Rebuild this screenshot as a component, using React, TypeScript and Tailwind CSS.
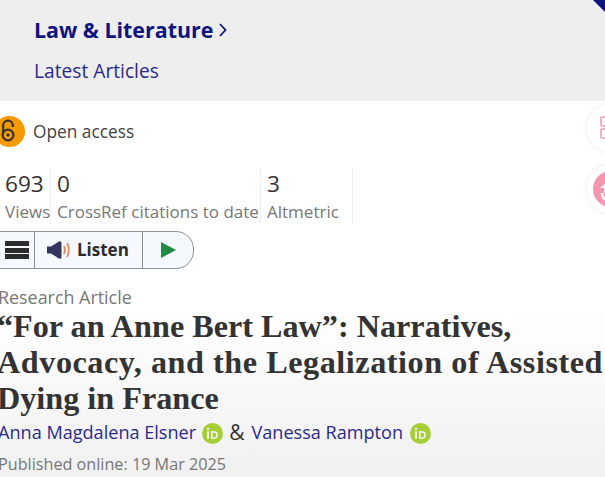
const OrcidBadge = () => (
  <svg width="21" height="21" viewBox="0 0 21 21" className="shrink-0">
    <circle cx="10.5" cy="10.5" r="10.5" fill="#a6ce39" />
    <rect x="5.2" y="8.2" width="1.7" height="7.6" fill="#fff" />
    <circle cx="6" cy="5.8" r="1.1" fill="#fff" />
    <path d="M9 8.2h3c2.4 0 3.9 1.6 3.9 3.8s-1.5 3.8-3.9 3.8H9z M10.6 9.6v4.8h1.4c1.6 0 2.3-1.1 2.3-2.4s-.8-2.4-2.3-2.4z" fill="#fff" fillRule="evenodd" />
  </svg>
);

const stats = [
  { value: "693", label: "Views", width: "w-[46px]" },
  { value: "0", label: "CrossRef citations to date", width: "w-[210px]" },
  { value: "3", label: "Altmetric", width: "w-[92px]" },
];

export default function App() {
  return (
    <div className="relative h-[477px] w-[605px] overflow-hidden bg-white font-['Open_Sans',sans-serif]">
      <header className="flex h-[101px] flex-col bg-[#eeeeee] pl-[34px] pt-[15px]">
        <div className="flex items-center gap-[6px] text-[21.4px] font-bold leading-[30px] text-[#10147e]">
          Law &amp; Literature
          <svg width="8" height="14" viewBox="0 0 8 14" fill="none" stroke="#10147e" strokeWidth="1.8">
            <path d="M1 1l5.5 6L1 13" />
          </svg>
        </div>
        <div className="mt-[13px] text-[19.2px] leading-[26px] text-[#2a2a8c]">Latest Articles</div>
      </header>

      {/* corner ribbon */}
      <svg width="12" height="12" viewBox="0 0 12 12" className="absolute right-0 top-0">
        <path d="M0 0h12v12z" fill="#10147e" />
      </svg>

      <main className="-ml-[2px] flex flex-col">
        <div className="mt-[14px] flex h-[32px] items-center gap-[8px]">
          <div className="-ml-[4px] flex h-[31px] w-[31px] items-center justify-center rounded-full bg-[#f59a00]">
            <svg width="18" height="26" viewBox="0 0 18 26" fill="none" stroke="#333" strokeWidth="2.2" className="-translate-x-[2px]">
              <circle cx="9" cy="17" r="5.4" />
              <circle cx="9" cy="17" r="1.2" fill="#333" strokeWidth="1" />
              <path d="M4.2 14.500V7.500a4.800 4.800 0 0 1 9.600 0v1.500" />
            </svg>
          </div>
          <span className="mt-[2px] text-[17.3px] leading-[24px] text-[#444]">Open access</span>
        </div>

        <div className="ml-[2px] mt-[21px] flex h-[56px]">
          <div className="w-[5px] shrink-0" />
          {stats.map((s) => (
            <div key={s.label} className={`${s.width} shrink-0 border-r-[1.5px] border-[#eeeeee] pr-[6px] first:pl-0 [&:not(:nth-child(2))]:pl-[6px]`}>
              <div className="text-[22.6px] leading-[31px] text-[#333]">{s.value}</div>
              <div className="mt-[1px] whitespace-nowrap text-[17px] leading-[24px] text-[#777]">{s.label}</div>
            </div>
          ))}
        </div>

        <div className="mt-[7px] flex h-[38px] w-[196px] items-stretch overflow-hidden rounded-r-[18px] border border-[#8a9099] bg-[#f5f8fc]">
          <div className="flex w-[36px] shrink-0 flex-col items-center justify-center gap-[1.5px] border-r border-[#8a9099]">
            <span className="h-[5px] w-[24px] bg-[#2b2b2b]" />
            <span className="h-[5px] w-[24px] bg-[#2b2b2b]" />
            <span className="h-[5px] w-[24px] bg-[#2b2b2b]" />
          </div>
          <div className="flex w-[108px] shrink-0 items-center gap-[5px] border-r border-[#8a9099] pl-[12px]">
            <svg width="25" height="20" viewBox="0 0 25 20" fill="none" className="shrink-0">
              <path d="M0 6.500h4L12 1.500c1.500 -.8 2.500 0 2.500 1.500v14c0 1.500 -1 2.300 -2.500 1.500L4 13.500H0z" fill="#34365f" />
              <path d="M17 6c1.200 2.500 1.200 5.500 0 8" stroke="#f4805a" strokeWidth="1.7" />
              <path d="M20 3c2.400 4 2.400 10 0 14" stroke="#f4805a" strokeWidth="1.7" />
            </svg>
            <span className="text-[17px] font-bold leading-[24px] text-[#2b2b2b]">Listen</span>
          </div>
          <div className="flex flex-1 items-center pl-[18px]">
            <svg width="15" height="16" viewBox="0 0 15 16">
              <path d="M0 0l15 8-15 8z" fill="#1f8a43" />
            </svg>
          </div>
        </div>

        <div className="mt-[16px] text-[17.9px] leading-[24px] text-[#777]">Research Article</div>

        <div className="-mt-[1px] bg-gradient-to-b from-white to-[#efefef]">
          <h1 className="-ml-[1px] whitespace-nowrap font-['Liberation_Serif',serif] text-[32.2px] font-bold leading-[36px] text-[#333]">
            <span className="block">“For an Anne Bert Law”: Narratives,</span>
            <span className="block tracking-[0.55px]">Advocacy, and the Legalization of Assisted</span>
            <span className="block">Dying in France</span>
          </h1>
          <div className="mt-[2px] flex h-[30px] items-center text-[18.1px] text-[#2a2a8c]">
            <span>Anna Magdalena Elsner</span>
            <span className="ml-[6px]"><OrcidBadge /></span>
            <span className="ml-[6px] mr-[7px] text-[21px] text-[#333]">&amp;</span>
            <span>Vanessa Rampton</span>
            <span className="ml-[7px]"><OrcidBadge /></span>
          </div>
          <div className="mt-[4px] h-[39px] text-[16.2px] leading-[24px] text-[#777]">Published online: 19 Mar 2025</div>
        </div>
      </main>

      {/* floating side buttons */}
      <div className="absolute left-[587px] top-[105px] flex h-[46px] w-[46px] items-center rounded-full bg-white pl-[13px] shadow-[0_0_6px_rgba(0,0,0,0.08)]">
        <svg width="26" height="24" viewBox="0 0 26 24" fill="none" stroke="#f29bb0" strokeWidth="1.6">
          <rect x="1" y="1" width="9" height="9" rx="1" />
          <rect x="1" y="13" width="9" height="9" rx="1" />
        </svg>
      </div>
      <div className="absolute left-[587px] top-[165px] flex h-[48px] w-[48px] items-center justify-center rounded-full bg-white shadow-[0_0_6px_rgba(0,0,0,0.08)]">
        <svg width="36" height="36" viewBox="0 0 36 36" className="-ml-[1px]">
          <circle cx="18" cy="18" r="18" fill="#f397ae" />
          <path d="M14 11l-7 6h4v5h6z" fill="#fff" />
          <path d="M9 22c0 5 4 8 9 7" stroke="#fff" strokeWidth="2.500" fill="none" />
        </svg>
      </div>
    </div>
  );
}
